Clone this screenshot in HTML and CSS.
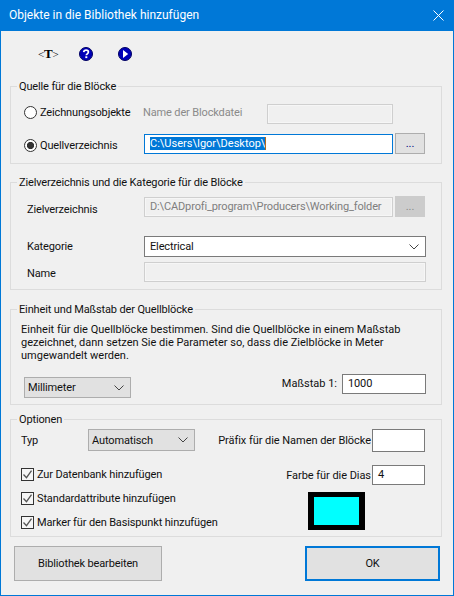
FILE: index.html
```html
<!DOCTYPE html>
<html lang="de">
<head>
<meta charset="utf-8">
<title>Objekte in die Bibliothek hinzufügen</title>
<link rel="stylesheet" href="styles.css">
</head>
<body>
<div class="window">
  <header class="titlebar">
    <span class="title">Objekte in die Bibliothek hinzufügen</span>
    <svg class="close" width="11" height="11" viewBox="0 0 11 11"><path d="M.5.5l10 10M10.5.5l-10 10" stroke="#fff" fill="none"/></svg>
  </header>
  <div class="content">
    <div class="toolbar">
      <span class="tool-t">&lt;<b class="tool-t-letter">T</b>&gt;</span>
      <svg class="tool-help" width="14" height="14" viewBox="0 0 14 14"><circle cx="7" cy="7" r="6.500" fill="#0000b8" stroke="#000060"/><path d="M4.700 5.200C4.900 3.800 5.900 3.200 7.100 3.200c1.400 0 2.300.8 2.300 1.900 0 1.700-2.100 1.700-2.100 3.200" stroke="#fff" stroke-width="1.700" fill="none"/><rect x="6.300" y="9.300" width="2" height="1.800" fill="#fff"/></svg>
      <svg class="tool-play" width="14" height="14" viewBox="0 0 14 14"><circle cx="7" cy="7" r="6.500" fill="#0000b8" stroke="#000060"/><path d="M5 3l5.200 4L5 11z" fill="#fff"/></svg>
    </div>

    <section class="group group-source">
      <div class="legend">Quelle für die Blöcke</div>
      <div class="grid-source">
        <label class="option up"><input class="radio" type="radio" name="src">Zeichnungsobjekte</label>
        <span class="muted shift up">Name der Blockdatei</span>
        <div class="field disabled"></div>
        <span></span>
        <label class="option down"><input class="radio" type="radio" name="src" checked>Quellverzeichnis</label>
        <div class="field focused span2"><span class="selected">C:\Users\Igor\Desktop\</span><span class="caret"></span></div>
        <button class="btn small">...</button>
      </div>
    </section>

    <section class="group group-target">
      <div class="legend">Zielverzeichnis und die Kategorie für die Blöcke</div>
      <div class="grid-target">
        <span class="dir-label">Zielverzeichnis</span>
        <div class="field disabled path">D:\CADprofi_program\Producers\Working_folder</div>
        <button class="btn small off">...</button>
        <span class="cat-label">Kategorie</span>
        <div class="combo white span2 cat-combo">Electrical<svg class="chev" width="10" height="6" viewBox="0 0 10 6"><path d="M.5.5L5 5 9.500.5" fill="none" stroke="#444"/></svg></div>
        <span class="name-label">Name</span>
        <div class="field disabled span2 name-field"></div>
      </div>
    </section>

    <section class="group group-unit">
      <div class="legend">Einheit und Maßstab der Quellblöcke</div>
      <p class="note">Einheit für die Quellblöcke bestimmen. Sind die Quellblöcke in einem Maßstab<br>gezeichnet, dann setzen Sie die Parameter so, dass die Zielblöcke in Meter<br>umgewandelt werden.</p>
      <div class="unit-row">
        <div class="combo unit">Millimeter<svg class="chev" width="10" height="6" viewBox="0 0 10 6"><path d="M.5.5L5 5 9.500.5" fill="none" stroke="#444"/></svg></div>
        <span class="scale-label">Maßstab 1:</span>
        <div class="field entry scale">1000</div>
      </div>
    </section>

    <section class="group group-options">
      <div class="legend">Optionen</div>
      <div class="options">
        <div class="options-left">
          <div class="type-row">
            <span class="type-label">Typ</span>
            <div class="combo unit">Automatisch<svg class="chev" width="10" height="6" viewBox="0 0 10 6"><path d="M.5.5L5 5 9.500.5" fill="none" stroke="#444"/></svg></div>
          </div>
          <label class="check"><span class="box"><svg width="11" height="11" viewBox="0 0 11 11"><path d="M1.500 5.500l3 3.200 5-7" fill="none" stroke="#555" stroke-width="1.300"/></svg></span>Zur Datenbank hinzufügen</label>
          <label class="check"><span class="box"><svg width="11" height="11" viewBox="0 0 11 11"><path d="M1.500 5.500l3 3.200 5-7" fill="none" stroke="#555" stroke-width="1.300"/></svg></span>Standardattribute hinzufügen</label>
          <label class="check"><span class="box"><svg width="11" height="11" viewBox="0 0 11 11"><path d="M1.500 5.500l3 3.200 5-7" fill="none" stroke="#555" stroke-width="1.300"/></svg></span>Marker für den Basispunkt hinzufügen</label>
        </div>
        <div class="options-right">
          <div class="pair prefix"><span>Präfix für die Namen der Blöcke</span><div class="field entry short tall"></div></div>
          <div class="pair colour"><span>Farbe für die Dias</span><div class="field entry short">4</div></div>
          <div class="swatch"></div>
        </div>
      </div>
    </section>

    <footer class="actions">
      <button class="btn big">Bibliothek bearbeiten</button>
      <button class="btn big ok">OK</button>
    </footer>
  </div>
</div>
</body>
</html>
```
FILE: styles.css
```css
* { box-sizing: border-box; }
html, body { margin: 0; height: 100%; }
body {
  overflow: hidden;
  background: #f0f0f0;
  color: #111;
  font: 11px/13px Roboto, "Open Sans", sans-serif;
  letter-spacing: -0.14px;
}
.window {
  width: 454px;
  height: 596px;
  border: 1px solid #0078d7;
  background: #f0f0f0;
}
.titlebar {
  display: flex;
  align-items: center;
  justify-content: space-between;
  height: 31px;
  margin: -1px -1px 0;
  padding: 0 10px 1px 9px;
  background: #0078d7;
  color: #fff;
  font-size: 12px;
  letter-spacing: 0;
}
.content { padding: 0 11px 0 9px; }
.toolbar {
  display: flex;
  align-items: flex-start;
  height: 55px;
  padding: 16px 0 0 28px;
}
.tool-t {
  width: 17px;
  font: 11px/14px "Liberation Serif", serif;
  color: #000;
  text-align: center;
  white-space: nowrap;
}
.tool-t-letter { font-size: 13px; }
.tool-help { margin-left: 24px; }
.tool-play { margin-left: 25px; }

.group { border: 1px solid #dcdcdc; }
.legend {
  display: table;
  height: 14px;
  margin: -8px 0 0 6px;
  padding: 1px 2px 0;
  background: #f0f0f0;
}
.group-source { height: 78px; }
.group-target { height: 108px; margin-top: 18px; }
.group-unit { height: 96px; margin-top: 19px; }
.group-options { height: 118px; margin-top: 14px; }

.grid-source {
  display: grid;
  grid-template-columns: 120px 123px 126px 32px;
  grid-template-rows: 20px 21px;
  row-gap: 9px;
  align-items: center;
  margin-top: 11px;
  padding-left: 13px;
}
.up { margin-top: -4px; }
.down { margin-top: 3px; }
.grid-target {
  display: grid;
  grid-template-columns: 117px 249px 33px;
  grid-template-rows: 21px 40px 25px;
  align-items: center;
  margin-top: 7px;
  padding-left: 16px;
}
.dir-label { margin-top: 5px; }
.cat-label { margin-top: 19px; }
.cat-combo { align-self: end; }
.name-label { margin-top: 8px; }
.name-field { align-self: end; }
.span2 { grid-column: span 2; }
.shift { margin-left: -1px; }
.muted { color: #8a8a8a; }

.option { display: flex; align-items: center; gap: 3px; }
.radio {
  appearance: none;
  width: 13px;
  height: 13px;
  margin: 0;
  border: 1px solid #333;
  border-radius: 50%;
  background: #fff;
}
.radio:checked { background: radial-gradient(circle, #333 0 3.200px, #fff 4px); }

.field {
  height: 20px;
  padding: 0 5px;
  line-height: 18px;
  white-space: nowrap;
  overflow: hidden;
}
.disabled {
  border: 1px solid #cfcfcf;
  box-shadow: inset 0 0 0 1px #f6f6f6;
  background: #f0f0f0;
  color: #7e7e7e;
}
.path { margin-top: 1px; }
.focused {
  display: flex;
  align-items: center;
  border: 1px solid #0078d7;
  background: #fff;
}
.selected {
  background: #0078d7;
  color: #fff;
  line-height: 13px;
  letter-spacing: 0;
}
.caret { width: 1px; height: 13px; background: #b36a1c; }
.entry {
  border: 1px solid #7a7a7a;
  background: #fff;
  color: #111;
}

.btn {
  border: 1px solid #adadad;
  background: #e1e1e1;
  color: #111;
  font: inherit;
  letter-spacing: inherit;
  padding: 0;
}
.small {
  width: 30px;
  height: 21px;
  margin-left: 2px;
  color: #000080;
}
.off {
  border-color: #cccccc;
  background: #cccccc;
  color: #888;
}
.big { height: 35px; width: 148px; }
.ok {
  width: 135px;
  border: 2px solid #0078d7;
}

.combo {
  display: flex;
  align-items: center;
  justify-content: space-between;
  height: 21px;
  padding: 0 6px 0 3px;
  border: 1px solid #adadad;
  background: #e1e1e1;
}
.white {
  padding-left: 5px;
  border-color: #7a7a7a;
  background: #fff;
}
.chev { flex: none; }

.note {
  margin: 7px 0 0;
  padding-left: 10px;
  white-space: nowrap;
  letter-spacing: 0;
}
.unit-row {
  display: flex;
  align-items: flex-start;
  height: 24px;
  margin-top: 12px;
  padding: 0 15px 0 13px;
}
.unit { width: 107px; margin-top: 3px; }
.scale-label { margin-left: auto; line-height: 20px; letter-spacing: 0; }
.scale { width: 84px; margin-left: 5px; }

.options {
  display: flex;
  justify-content: space-between;
  padding: 3px 16px 0 10px;
}
.options-left { display: flex; flex-direction: column; width: 190px; }
.type-row { display: flex; height: 33px; }
.type-row .unit { margin-top: 0; height: 22px; }
.type-label { width: 67px; line-height: 24px; }
.check { display: flex; align-items: center; height: 24px; gap: 3px; white-space: nowrap; }
.box {
  display: flex;
  flex: none;
  width: 13px;
  height: 13px;
  border: 1px solid #333;
  background: #f6f6f6;
}
.options-right { display: flex; flex-direction: column; align-items: flex-end; }
.pair { display: flex; align-items: center; gap: 1px; white-space: nowrap; letter-spacing: -0.05px; }
.short { width: 53px; }
.tall { height: 23px; }
.colour { margin-top: 13px; }
.swatch {
  width: 57px;
  height: 38px;
  margin: 7px 60px 0 0;
  border: solid #000;
  border-width: 5px 6px;
  background: #00ffff;
}
.actions {
  display: flex;
  justify-content: space-between;
  margin: 9px 2px 0 4px;
}
```
